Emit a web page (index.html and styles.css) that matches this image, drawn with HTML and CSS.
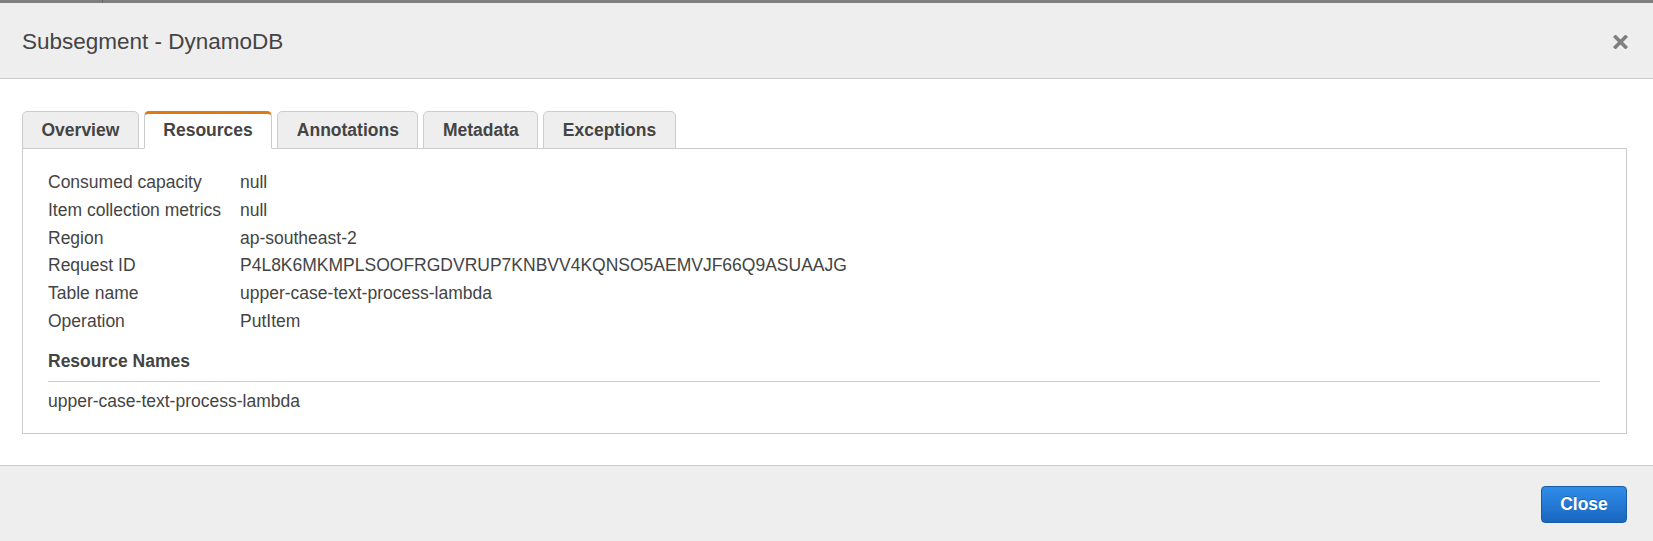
FILE: index.html
```html
<!DOCTYPE html>
<html>
<head>
<meta charset="utf-8">
<link rel="stylesheet" href="styles.css">
</head>
<body>
<div class="modal">
  <div class="topbar"><span class="topbar-left"></span></div>
  <div class="header">
    <div class="title">Subsegment - DynamoDB</div>
    <svg class="close-x" width="15" height="14" viewBox="0 0 15 14">
      <path d="M2.5 2 L12.5 12 M12.5 2 L2.5 12" stroke="#7f7f7f" stroke-width="3.6" stroke-linecap="square"/>
    </svg>
  </div>
  <div class="body">
    <div class="tabs">
      <div class="tab">Overview</div>
      <div class="tab active">Resources</div>
      <div class="tab">Annotations</div>
      <div class="tab">Metadata</div>
      <div class="tab">Exceptions</div>
    </div>
    <div class="panel">
      <div class="rows">
        <div class="label">Consumed capacity</div><div class="value">null</div>
        <div class="label">Item collection metrics</div><div class="value">null</div>
        <div class="label">Region</div><div class="value">ap-southeast-2</div>
        <div class="label">Request ID</div><div class="value">P4L8K6MKMPLSOOFRGDVRUP7KNBVV4KQNSO5AEMVJF66Q9ASUAAJG</div>
        <div class="label">Table name</div><div class="value">upper-case-text-process-lambda</div>
        <div class="label">Operation</div><div class="value">PutItem</div>
      </div>
      <div class="section-title">Resource Names</div>
      <div class="section-value">upper-case-text-process-lambda</div>
    </div>
  </div>
  <div class="footer">
    <button class="btn-close">Close</button>
  </div>
</div>
</body>
</html>
```

FILE: styles.css
```css
html, body {
  margin: 0;
  padding: 0;
  background: #ffffff;
}
body {
  font-family: "Liberation Sans", Arial, sans-serif;
  color: #444444;
  font-size: 17.5px;
}
.modal {
  width: 1653px;
  height: 541px;
  display: flex;
  flex-direction: column;
  overflow: hidden;
}
.topbar {
  height: 3px;
  background: #7f7f7f;
  display: flex;
}
.topbar-left {
  width: 102px;
  height: 3px;
  border-right: 1px solid #666666;
}
.header {
  background: #eeeeee;
  border-bottom: 1px solid #cccccc;
  box-sizing: border-box;
  padding: 25px 25px 23px 22px;
  display: flex;
  align-items: center;
  justify-content: space-between;
  height: 76px;
}
.title {
  font-size: 22.5px;
  line-height: 27px;
  color: #444444;
}
.close-x {
  display: block;
  margin-top: 1px;
}
.body {
  padding: 32px 26px 31px 22px;
}
.tabs {
  display: flex;
  gap: 5px;
  margin-bottom: -1px;
}
.tab {
  position: relative;
  z-index: 1;
  background: #eeeeee;
  border: 1px solid #cccccc;
  border-radius: 5px 5px 0 0;
  padding: 8px 18.5px;
  line-height: 20px;
  font-weight: bold;
  color: #444444;
}
.tab.active {
  background: #ffffff;
  border-top: 3px solid #e07a10;
  padding-top: 6px;
  border-bottom-color: #ffffff;
}
.panel {
  border: 1px solid #cccccc;
  padding: 20px 26px 22px 25px;
}
.rows {
  display: grid;
  grid-template-columns: 192px 1fr;
  line-height: 27.8px;
}
.section-title {
  margin-top: 15px;
  font-weight: bold;
  line-height: 20px;
  padding-bottom: 10px;
  border-bottom: 1px solid #cccccc;
}
.section-value {
  margin-top: 9px;
  line-height: 20px;
}
.footer {
  flex: 1;
  background: #eeeeee;
  border-top: 1px solid #cccccc;
  padding: 20px 26px 0 22px;
  display: flex;
  justify-content: flex-end;
  align-items: flex-start;
}
.btn-close {
  font-family: "Liberation Sans", Arial, sans-serif;
  font-size: 17.5px;
  font-weight: bold;
  line-height: 20px;
  color: #ffffff;
  padding: 7px 18px 8px;
  border: 1px solid #1b5ba3;
  border-radius: 4px;
  background: linear-gradient(#2f8de9, #1966c0);
  text-shadow: 0 -1px 0 rgba(0, 0, 0, 0.25);
  width: 86px;
}
```
